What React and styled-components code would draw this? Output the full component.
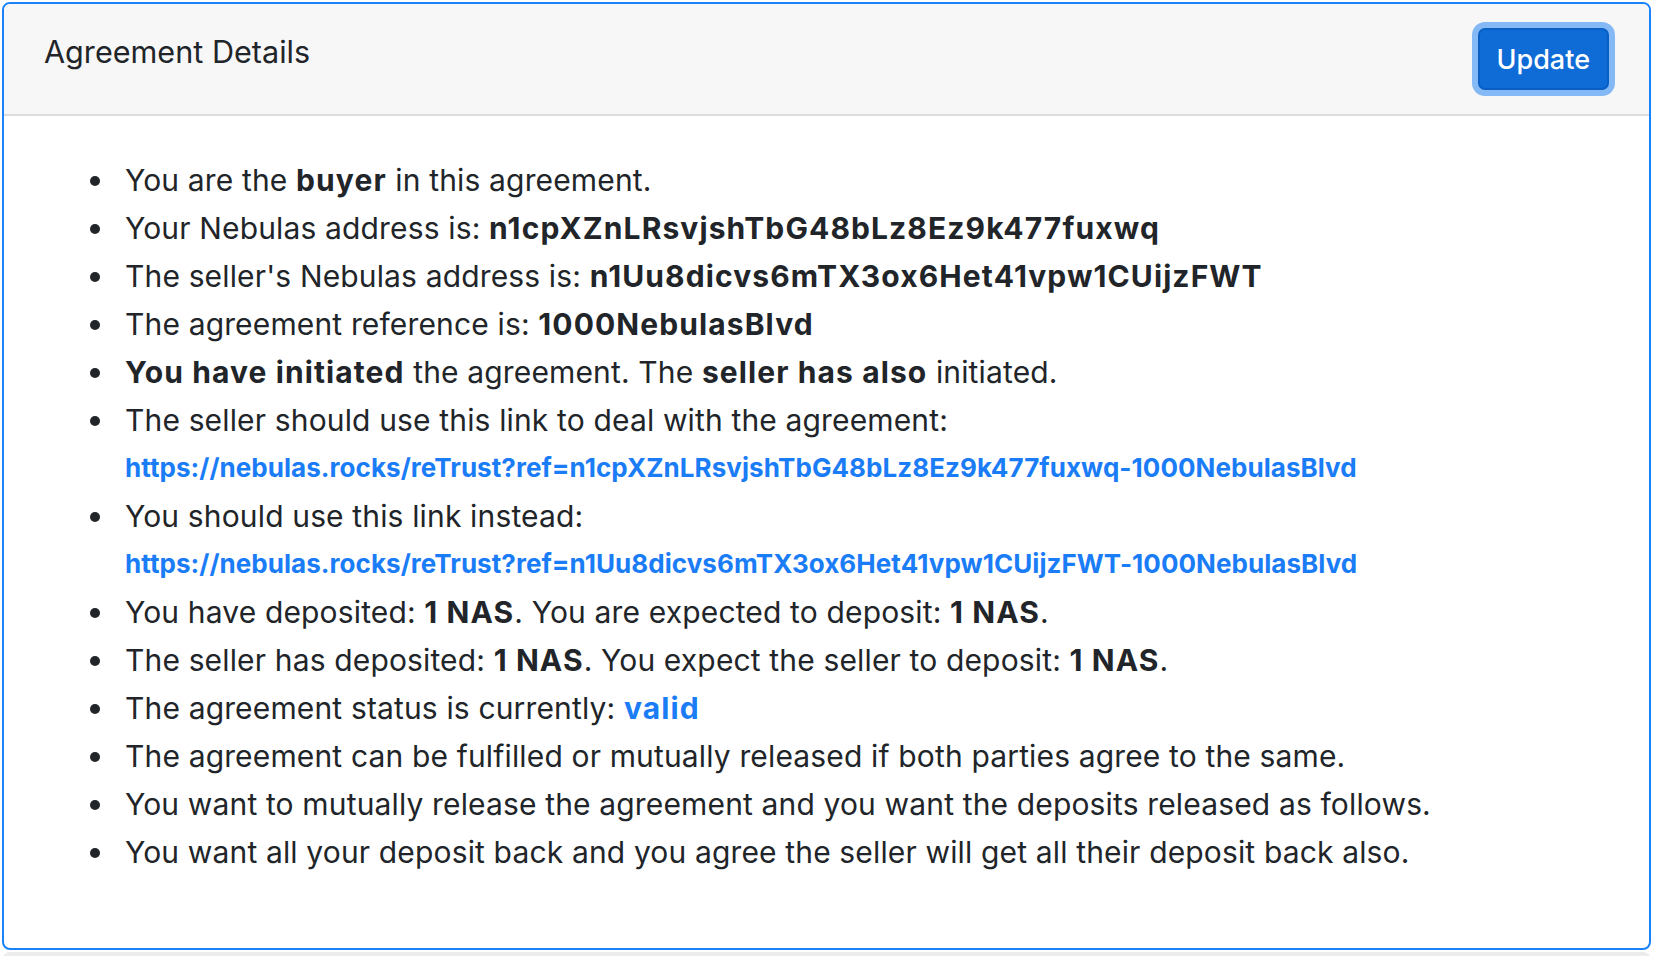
import React from "react";
import styled, { createGlobalStyle } from "styled-components";

const GlobalStyle = createGlobalStyle`
  html, body {
    margin: 0;
    padding: 0;
    background: #ffffff;
  }
  body {
    font-family: Inter, "Noto Sans", "Liberation Sans", sans-serif;
    color: #212529;
  }
`;

const Page = styled.div`
  padding: 2px 0 0 2px;
`;

const Card = styled.div`
  width: 1649px;
  box-sizing: border-box;
  border: 2px solid #1a82fb;
  border-radius: 8px;
  background: #ffffff;
  overflow: hidden;
`;

const CardHeader = styled.div`
  display: flex;
  justify-content: space-between;
  align-items: flex-start;
  padding: 24px 40px;
  background: #f7f7f7;
  border-bottom: 2px solid #dcdcdc;
`;

const Title = styled.div`
  font-size: 30.6px;
  line-height: 48px;
`;

const Button = styled.button`
  height: 62px;
  padding: 0 17px;
  font-family: inherit;
  font-size: 27px;
  font-weight: 500;
  color: #ffffff;
  background: #0f6bd6;
  border: 2px solid #0a5fc4;
  border-radius: 7px;
  box-shadow: 0 0 0 6px #85b9f6;
  cursor: pointer;
`;

const CardBody = styled.div`
  padding: 40px;
`;

const List = styled.ul`
  margin: 0 0 32px;
  padding-left: 46px;
  list-style: none;
  font-size: 30px;
  line-height: 48px;
  letter-spacing: 0.15px;
`;

const Item = styled.li`
  display: flex;
  align-items: flex-start;
`;

const Bullet = styled.span`
  flex: none;
  width: 10px;
  height: 10px;
  margin: 20px 25px 0 0;
  border-radius: 50%;
  background: #212529;
`;

const Content = styled.div`
  flex: 1;
  min-width: 0;
`;

const Bold = styled.strong`
  font-weight: 700;
  letter-spacing: 1.1px;
  color: ${(p) => (p.$accent ? "#1a7cf6" : "#212529")};
`;

const LinkLine = styled.a`
  display: block;
  font-size: 26px;
  line-height: 48px;
  font-weight: 700;
  color: #1a7cf6;
  text-decoration: none;
  letter-spacing: 0.05px;
`;

const NextCard = styled.div`
  width: 1649px;
  height: 10px;
  margin-top: 2px;
  border-radius: 8px 8px 0 0;
  background: #ececec;
`;

const buyer = "n1cpXZnLRsvjshTbG48bLz8Ez9k477fuxwq";
const seller = "n1Uu8dicvs6mTX3ox6Het41vpw1CUijzFWT";
const reference = "1000NebulasBlvd";
const base = "https://nebulas.rocks/reTrust?ref=";

function Point({ children }) {
  return (
    <Item>
      <Bullet />
      <Content>{children}</Content>
    </Item>
  );
}

export default function App() {
  return (
    <Page>
      <GlobalStyle />
      <Card>
        <CardHeader>
          <Title>Agreement Details</Title>
          <Button>Update</Button>
        </CardHeader>
        <CardBody>
          <List>
            <Point>
              You are the <Bold>buyer</Bold> in this agreement.
            </Point>
            <Point>
              Your Nebulas address is: <Bold>{buyer}</Bold>
            </Point>
            <Point>
              The seller's Nebulas address is: <Bold>{seller}</Bold>
            </Point>
            <Point>
              The agreement reference is: <Bold>{reference}</Bold>
            </Point>
            <Point>
              <Bold>You have initiated</Bold> the agreement. The{" "}
              <Bold>seller has also</Bold> initiated.
            </Point>
            <Point>
              The seller should use this link to deal with the agreement:
              <LinkLine href="#">{`${base}${buyer}-${reference}`}</LinkLine>
            </Point>
            <Point>
              You should use this link instead:
              <LinkLine href="#">{`${base}${seller}-${reference}`}</LinkLine>
            </Point>
            <Point>
              You have deposited: <Bold>1 NAS</Bold>. You are expected to
              deposit: <Bold>1 NAS</Bold>.
            </Point>
            <Point>
              The seller has deposited: <Bold>1 NAS</Bold>. You expect the
              seller to deposit: <Bold>1 NAS</Bold>.
            </Point>
            <Point>
              The agreement status is currently: <Bold $accent>valid</Bold>
            </Point>
            <Point>
              The agreement can be fulfilled or mutually released if both
              parties agree to the same.
            </Point>
            <Point>
              You want to mutually release the agreement and you want the
              deposits released as follows.
            </Point>
            <Point>
              You want all your deposit back and you agree the seller will get
              all their deposit back also.
            </Point>
          </List>
        </CardBody>
      </Card>
      <NextCard />
    </Page>
  );
}
